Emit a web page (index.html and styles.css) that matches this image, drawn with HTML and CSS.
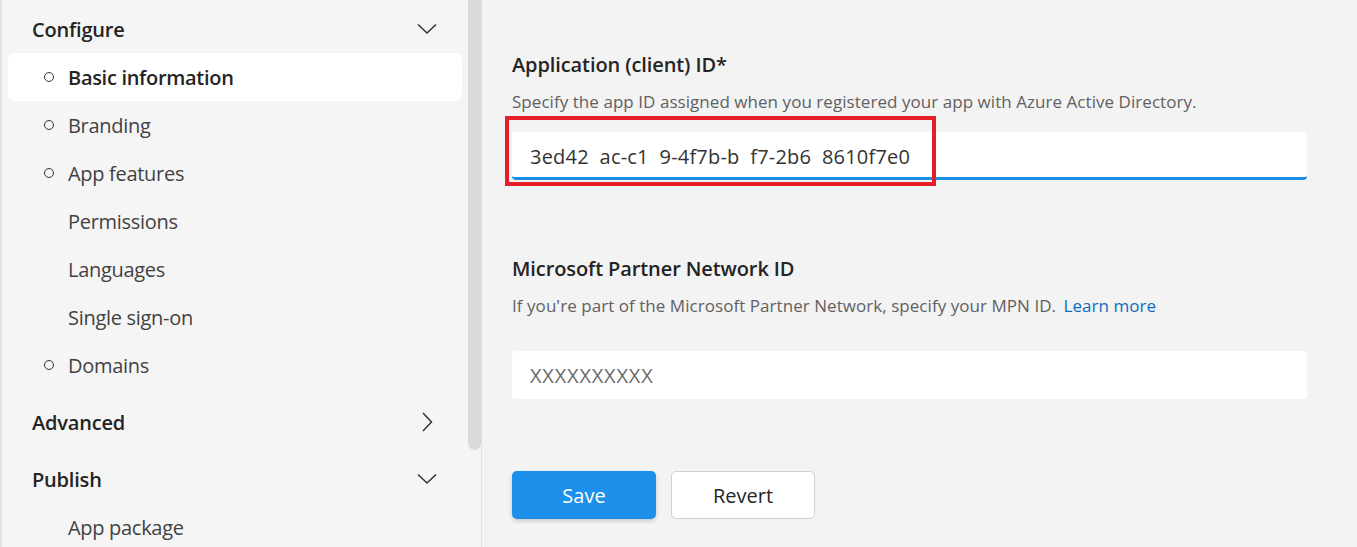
FILE: index.html
```html
<!DOCTYPE html>
<html>
<head>
<meta charset="utf-8">
<link rel="stylesheet" href="styles.css">
</head>
<body>
<div class="app">
  <aside class="sidebar">
    <nav class="nav">
      <div class="group">
        <div class="group-head">
          <span>Configure</span>
          <svg class="chev" width="20" height="12" viewBox="0 0 20 12"><path d="M1 1.5 L10 10 L19 1.5" fill="none" stroke="#333" stroke-width="1.5"/></svg>
        </div>
        <div class="item selected"><span class="dot"></span><span class="label">Basic information</span></div>
        <div class="item"><span class="dot"></span><span class="label">Branding</span></div>
        <div class="item"><span class="dot"></span><span class="label">App features</span></div>
        <div class="item"><span class="nodot"></span><span class="label">Permissions</span></div>
        <div class="item"><span class="nodot"></span><span class="label">Languages</span></div>
        <div class="item"><span class="nodot"></span><span class="label">Single sign-on</span></div>
        <div class="item"><span class="dot"></span><span class="label">Domains</span></div>
      </div>
      <div class="group">
        <div class="group-head">
          <span>Advanced</span>
          <svg class="chev chev-right" width="20" height="20" viewBox="0 0 20 20"><path d="M6 1 L14.5 10 L6 19" fill="none" stroke="#333" stroke-width="1.5"/></svg>
        </div>
      </div>
      <div class="group">
        <div class="group-head">
          <span>Publish</span>
          <svg class="chev" width="20" height="12" viewBox="0 0 20 12"><path d="M1 1.5 L10 10 L19 1.5" fill="none" stroke="#333" stroke-width="1.5"/></svg>
        </div>
        <div class="item"><span class="nodot"></span><span class="label">App package</span></div>
      </div>
    </nav>
    <div class="scrolltrack"><div class="thumb"></div></div>
  </aside>
  <main class="main">
    <section class="field first">
      <h2 class="field-label">Application (client) ID*</h2>
      <p class="field-desc">Specify the app ID assigned when you registered your app with Azure Active Directory.</p>
      <div class="input-wrap">
        <div class="input active">3ed42&nbsp; ac-c1&nbsp; 9-4f7b-b&nbsp; f7-2b6&nbsp; 8610f7e0</div>
        <div class="highlight"></div>
      </div>
    </section>
    <section class="field second">
      <h2 class="field-label">Microsoft Partner Network ID</h2>
      <p class="field-desc">If you're part of the Microsoft Partner Network, specify your MPN ID. <a class="link">Learn more</a></p>
      <div class="input placeholder">XXXXXXXXXX</div>
    </section>
    <div class="actions">
      <button class="btn primary">Save</button>
      <button class="btn secondary">Revert</button>
    </div>
  </main>
</div>
</body>
</html>
```
FILE: styles.css
```css
* { box-sizing: border-box; }
html, body { margin: 0; padding: 0; }
body {
  font-family: "Open Sans", "Noto Sans", sans-serif;
  background: #f3f3f3;
  color: #242424;
  width: 1357px;
  height: 547px;
  overflow: hidden;
}
.app { display: flex; height: 547px; }
.sidebar {
  width: 482px;
  flex: none;
  display: flex;
  background: #f5f5f5;
  border-left: 2px solid #e4e4e4;
  border-right: 1px solid #e2e2e2;
}
.nav { flex: 1; padding: 7px 6px 0 6px; }
.group { margin-bottom: 11px; }
.group-head {
  display: flex;
  align-items: center;
  justify-content: space-between;
  padding: 8px 24px 10px 24px;
  height: 46px;
  font-size: 20px;
  font-weight: 600;
  color: #242424;
  letter-spacing: -0.2px;
}
.chev { display: block; margin-right: 1px; }
.item {
  display: flex;
  align-items: center;
  height: 48px;
  border-radius: 7px;
  padding-left: 36px;
  font-size: 20px;
  color: #424242;
  letter-spacing: -0.3px;
}
.item.selected { background: #ffffff; font-weight: 600; color: #242424; }
.dot {
  width: 10px; height: 10px;
  border: 1px solid #333;
  border-radius: 50%;
  margin-right: 14px;
  flex: none;
}
.nodot { width: 10px; margin-right: 14px; flex: none; }
.scrolltrack { width: 13px; flex: none; }
.thumb {
  height: 450px;
  background: #dadada;
  border-radius: 0 0 7px 7px;
}
.main { flex: 1; padding: 51px 50px 0 30px; }
.field-label {
  margin: 0;
  font-size: 20px;
  line-height: 28px;
  font-weight: 600;
  color: #242424;
  letter-spacing: -0.1px;
}
.field-desc {
  margin: 11px 0 0 0;
  font-size: 17px;
  line-height: 24px;
  color: #616161;
  letter-spacing: 0.05px;
}
.link { color: #0f6cbd; margin-left: 3px; }
.input-wrap { position: relative; margin-top: 18px; }
.input {
  height: 48px;
  background: #ffffff;
  border-radius: 4px;
  padding-left: 18px;
  display: flex;
  align-items: center;
  font-size: 20px;
  color: #333333;
  letter-spacing: 0.2px;
  white-space: pre;
}
.input.active { border-bottom: 3px solid #1a8de6; padding-top: 3px; }
.input.placeholder { margin-top: 33px; color: #6b6b6b; letter-spacing: 0.8px; }
.highlight {
  position: absolute;
  left: -7px;
  top: -16px;
  width: 431px;
  height: 70px;
  border: 4px solid #e61e2a;
}
.second { margin-top: 75px; }
.actions { display: flex; gap: 15px; margin-top: 72px; }
.btn {
  width: 144px;
  height: 48px;
  border-radius: 5px;
  font-family: inherit;
  font-size: 20px;
  cursor: pointer;
}
.btn.primary {
  background: #1c90ea;
  color: #ffffff;
  border: none;
  box-shadow: 0 2px 4px rgba(0,0,0,0.18);
}
.btn.secondary {
  background: #ffffff;
  color: #242424;
  border: 1px solid #d1d1d1;
}
```
